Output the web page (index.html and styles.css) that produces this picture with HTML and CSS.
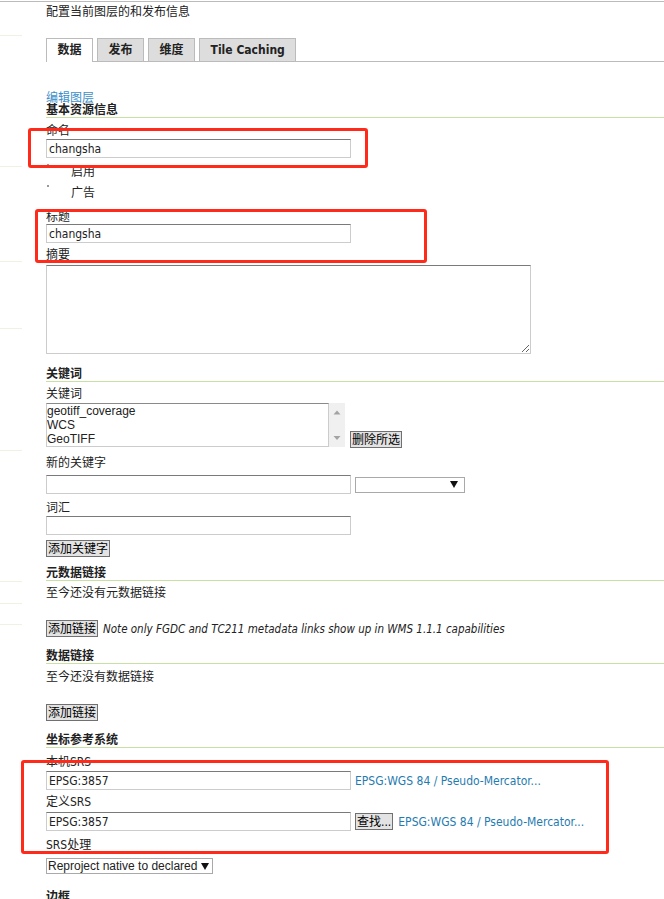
FILE: index.html
```html
<!DOCTYPE html>
<html lang="zh-CN">
<head>
    <meta charset="UTF-8">
    <meta name="viewport" content="width=device-width, initial-scale=1.0">
    <title>编辑图层</title>
    <link rel="stylesheet" href="styles.css">
</head>
<body>
<div class="page">
    <ul class="side">
        <li></li><li></li><li></li><li></li><li></li><li></li><li></li><li></li>
    </ul>

    <div class="content">
        <p class="desc">配置当前图层的和发布信息</p>

        <ul class="tabs">
            <li class="tab active">数据</li>
            <li class="tab">发布</li>
            <li class="tab">维度</li>
            <li class="tab">Tile Caching</li>
        </ul>

        <a class="edit-link" href="#">编辑图层</a>
        <h3 class="section">基本资源信息</h3>

        <label class="lbl m6">命名</label>
        <input class="text m1" type="text" value="changsha">
        <div class="check first"><span class="dot"></span>启用</div>
        <div class="check"><span class="dot"></span>广告</div>

        <label class="lbl m6">标题</label>
        <input class="text" type="text" value="changsha">

        <label class="lbl m5">摘要</label>
        <textarea class="abstract"></textarea>

        <!-- Schlagwörter -->
        <h3 class="section kw-head">关键词</h3>
        <label class="lbl m5">关键词</label>
        <div class="kw-row">
            <div class="listbox">
                <div class="items">
                    <div>geotiff_coverage</div>
                    <div>WCS</div>
                    <div>GeoTIFF</div>
                </div>
                <div class="scroll">
                    <svg width="16" height="44" viewBox="0 0 16 44">
                        <polygon points="4.5,11.5 11.5,11.5 8,7.5" fill="#a3a3a3"/>
                        <polygon points="4.5,33 11.5,33 8,37" fill="#a3a3a3"/>
                    </svg>
                </div>
            </div>
            <button class="btn del">删除所选</button>
        </div>

        <label class="lbl m9">新的关键字</label>
        <div class="row m5">
            <input class="text" type="text">
            <div class="select vocab">
                <svg width="8" height="7" viewBox="0 0 8 7"><polygon points="0,0 8,0 4,7" fill="#111"/></svg>
            </div>
        </div>

        <label class="lbl m7">词汇</label>
        <input class="text m1" type="text">
        <button class="btn block m5">添加关键字</button>

        <!-- Metadaten -->
        <h3 class="section m10">元数据链接</h3>
        <p class="plain m5">至今还没有元数据链接</p>
        <div class="row link-row">
            <button class="btn">添加链接</button>
            <em class="note">Note only FGDC and TC211 metadata links show up in WMS 1.1.1 capabilities</em>
        </div>

        <h3 class="section m13">数据链接</h3>
        <p class="plain m6">至今还没有数据链接</p>
        <div class="row link-row">
            <button class="btn">添加链接</button>
        </div>

        <!-- Koordinatensystem -->
        <h3 class="section m13">坐标参考系统</h3>
        <label class="lbl m7">本机SRS</label>
        <div class="row m2">
            <input class="text" type="text" value="EPSG:3857">
            <a class="srs-link" href="#">EPSG:WGS 84 / Pseudo-Mercator...</a>
        </div>

        <label class="lbl m5">定义SRS</label>
        <div class="row m3">
            <input class="text" type="text" value="EPSG:3857">
            <button class="btn find">查找...</button>
            <a class="srs-link near" href="#">EPSG:WGS 84 / Pseudo-Mercator...</a>
        </div>

        <label class="lbl m7">SRS处理</label>
        <div class="select srs-select">
            Reproject native to declared
            <svg width="8" height="7" viewBox="0 0 8 7"><polygon points="0,0 8,0 4,7" fill="#111"/></svg>
        </div>

        <h3 class="section bbox-head">边框</h3>
    </div>

    <!-- rote Markierungen -->
    <div class="mark mark-name"></div>
    <div class="mark mark-title"></div>
    <div class="mark mark-srs"></div>
</div>
</body>
</html>
```

FILE: styles.css
```css
body {
    margin: 0;
    background-color: #fff;
    color: #222;
    font-family: "DejaVu Sans Condensed", "Noto Sans CJK SC", sans-serif;
    font-size: 12px;
}

.page {
    position: relative;
    display: flex;
    margin-top: 1px;
    border-top: 1px solid #bbb;
    height: 897px;
    overflow: hidden;
}

/* linke Leiste, nur Reste sichtbar */
.side {
    display: grid;
    grid-template-rows: 34px 131px 95px 67px 122px 131px 22px 21px;
    align-content: start;
    width: 22px;
    margin: 0;
    padding: 0;
    list-style: none;
}

.side li {
    box-sizing: border-box;
    border-bottom: 1px solid #eef2e2;
}

.content {
    flex: 1;
    margin-left: 24px;
}

.desc {
    margin: 0;
    padding-top: 2px;
    line-height: 16px;
}

.tabs {
    display: flex;
    gap: 4px;
    margin: 18px 0 0;
    padding: 0;
    list-style: none;
    border-bottom: 1px solid #bbb;
}

.tab {
    line-height: 22px;
    padding: 0 10.5px;
    border: 1px solid #bbb;
    border-bottom: 0;
    background-color: #ddd;
    font-weight: bold;
}

.tab.active {
    background-color: #fff;
    margin-bottom: -1px;
    padding-bottom: 1px;
}

.edit-link {
    display: block;
    margin-top: 30px;
    line-height: 12px;
    color: #3d8fca;
    text-decoration: none;
}

.section {
    margin: 0;
    line-height: 13px;
    font-size: 12px;
    font-weight: bold;
    border-bottom: 1px solid #c8e0a2;
}

.lbl {
    display: block;
    line-height: 14px;
}

.plain {
    margin-bottom: 0;
    line-height: 14px;
}

.text {
    display: block;
    box-sizing: border-box;
    width: 305px;
    height: 19px;
    margin: 0;
    padding: 0 2px;
    border: 1px solid #ccc;
    border-top-color: #7a7a7a;
    font-family: "DejaVu Sans Condensed", "Noto Sans CJK SC", sans-serif;
    font-size: 12px;
    color: #222;
}

.check {
    display: flex;
    height: 21px;
    line-height: 21px;
}

.check.first {
    margin-top: 4px;
}

.dot {
    width: 2px;
    height: 2px;
    margin: 2px 22px 0 1px;
    background-color: #999;
}

.abstract {
    display: block;
    box-sizing: border-box;
    width: 485px;
    height: 89px;
    margin: 3px 0 0;
    border: 1px solid #ccc;
    border-top-color: #7a7a7a;
    resize: both;
}

.kw-head {
    margin-top: 14px;
}

.kw-row {
    display: flex;
    align-items: flex-end;
    margin-top: 2px;
}

.listbox {
    display: flex;
    height: 44px;
}

.items {
    box-sizing: border-box;
    width: 283px;
    height: 44px;
    overflow: hidden;
    border: 1px solid #ccc;
    border-top-color: #8a8a8a;
    font-family: "Liberation Sans", sans-serif;
    font-size: 12px;
    line-height: 14px;
}

.scroll {
    width: 16px;
    height: 44px;
    background-color: #f0f0f0;
}

.scroll svg {
    display: block;
}

.btn {
    box-sizing: border-box;
    height: 17px;
    margin: 0;
    padding: 0 1px;
    border: 1px solid #707070;
    background-color: #e3e3e3;
    color: #000;
    font-family: "DejaVu Sans Condensed", "Noto Sans CJK SC", sans-serif;
    font-size: 12px;
    line-height: 14px;
}

.btn.block {
    display: block;
}

.del {
    margin-left: 5px;
    margin-bottom: -1px;
}

.row {
    display: flex;
    align-items: center;
}

.select {
    box-sizing: border-box;
    display: flex;
    align-items: center;
    height: 16px;
    border: 1px solid #a9a9a9;
    background-color: #fff;
}

.vocab {
    width: 110px;
    margin-left: 4px;
    justify-content: flex-end;
    padding-right: 6px;
}

.srs-select {
    width: 167px;
    margin-top: 6px;
    padding-left: 1px;
    gap: 4px;
    font-family: "Liberation Sans", sans-serif;
    font-size: 12px;
}

.link-row {
    margin-top: 20px;
}

.note {
    margin-left: 5px;
    font-size: 11.5px;
}

.srs-link {
    margin-left: 4px;
    color: #1f7bb0;
    text-decoration: none;
}

.srs-link.near {
    margin-left: 5px;
}

.find {
    margin-left: 4px;
}

.bbox-head {
    margin-top: 17px;
}

.m1 { margin-top: 1px; }
.m2 { margin-top: 2px; }
.m3 { margin-top: 3px; }
.m5 { margin-top: 5px; }
.m6 { margin-top: 6px; }
.m7 { margin-top: 7px; }
.m9 { margin-top: 9px; }
.m10 { margin-top: 10px; }
.m13 { margin-top: 13px; }

/* Markierungen über dem Inhalt */
.mark {
    position: absolute;
    box-sizing: border-box;
    border: 3px solid #ff2a1a;
    border-radius: 3px;
}

.mark-name {
    left: 28px;
    top: 126px;
    width: 340px;
    height: 40px;
}

.mark-title {
    left: 35px;
    top: 207px;
    width: 392px;
    height: 54px;
}

.mark-srs {
    left: 21px;
    top: 758px;
    width: 588px;
    height: 94px;
}
```
